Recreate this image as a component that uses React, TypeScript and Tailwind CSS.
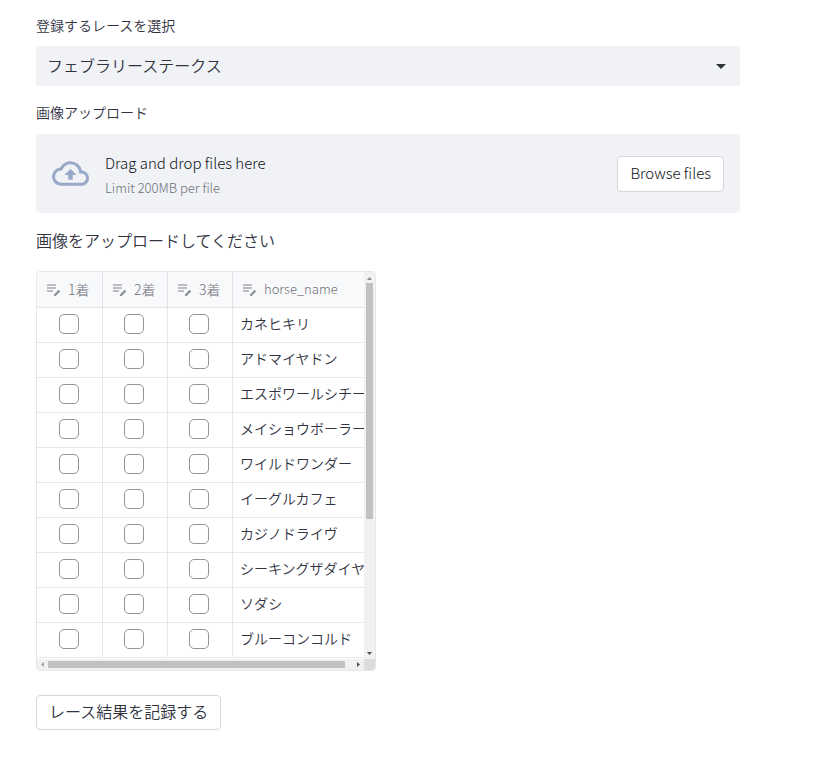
import React, { useState } from 'react';

const races = ['フェブラリーステークス'];

const places = ['1着', '2着', '3着'];

const horses = [
  'カネヒキリ',
  'アドマイヤドン',
  'エスポワールシチー',
  'メイショウボーラー',
  'ワイルドワンダー',
  'イーグルカフェ',
  'カジノドライヴ',
  'シーキングザダイヤ',
  'ソダシ',
  'ブルーコンコルド',
];

const EditIcon: React.FC = () => (
  <svg className="w-4 h-4 shrink-0" viewBox="0 0 16 16" fill="none" aria-hidden="true">
    <path d="M2 3h9M2 6h9M2 9h6" stroke="#bcbdc1" strokeWidth="2" />
    <path d="M9 14v-1.6l4.6-4.6 1.6 1.6L10.6 14z" fill="#8e9097" />
  </svg>
);

const CloudIcon: React.FC = () => (
  <svg className="w-[37px] h-[37px] shrink-0" viewBox="0 0 24 24" fill="#98a8c8" aria-hidden="true">
    <path d="M19.35 10.04A7.49 7.49 0 0 0 12 4C9.11 4 6.6 5.64 5.35 8.04A5.994 5.994 0 0 0 0 14c0 3.31 2.69 6 6 6h13c2.76 0 5-2.24 5-5 0-2.64-2.05-4.78-4.65-4.96zM19 18H6c-2.21 0-4-1.79-4-4 0-2.05 1.53-3.76 3.56-3.97l1.07-.11.5-.95A5.469 5.469 0 0 1 12 6c2.62 0 4.88 1.86 5.39 4.43l.3 1.5 1.53.11A2.98 2.98 0 0 1 22 15c0 1.65-1.35 3-3 3zM8 13h2.55v3h2.9v-3H16l-4-4z" />
  </svg>
);

const App: React.FC = () => {
  const [race, setRace] = useState(races[0]);
  const [checked, setChecked] = useState<Record<string, boolean>>({});

  const toggle = (key: string) => {
    setChecked((prev) => ({ ...prev, [key]: !prev[key] }));
  };

  return (
    <main className="bg-white pl-9 pr-[77px] pt-[15px] pb-10 font-['Noto_Sans_CJK_JP',sans-serif] font-[350] text-base text-[#31333f]">
      {/* Race select */}
      <label htmlFor="race" className="block text-sm leading-5 mb-[11px]">
        登録するレースを選択
      </label>
      <div className="relative mb-4">
        <select
          id="race"
          value={race}
          onChange={(e) => setRace(e.target.value)}
          className="block w-full h-10 appearance-none rounded bg-[#f0f2f6] pl-[11px] pr-9 pb-0.5 leading-6"
        >
          {races.map((name) => (
            <option key={name}>{name}</option>
          ))}
        </select>
        <svg className="absolute right-3.5 top-[18px] w-2.5 h-[5px] pointer-events-none" viewBox="0 0 10 5" aria-hidden="true">
          <path d="M0 0h10L5 5z" fill="#31333f" />
        </svg>
      </div>

      {/* Image upload */}
      <p className="text-sm leading-5 mb-3">画像アップロード</p>
      <section className="flex items-center rounded bg-[#f0f2f6] px-4 py-[13px] mb-[15px]">
        <CloudIcon />
        <div className="ml-4 pt-[3px] flex-1 font-light">
          <p className="text-[15px] leading-[25px] text-[#0e1117]">Drag and drop files here</p>
          <p className="text-[13px] leading-[25px] text-[#6f717a]">Limit 200MB per file</p>
        </div>
        <button type="button" className="h-9 rounded border border-[#d6d6d9] bg-white px-3 text-[15px] font-light text-[#0e1117]">
          Browse files
        </button>
      </section>

      <p className="leading-6 mb-[19px]">画像をアップロードしてください</p>

      {/* Result table */}
      <div className="w-[340px] max-w-full overflow-hidden rounded border border-[#e6e7ea] mb-6">
        <div className="flex">
          <div className="flex-1 min-w-0 overflow-hidden pb-px">
            <table className="w-full table-fixed border-separate border-spacing-0 text-sm">
              <thead>
                <tr className="h-9 bg-[#f8f9fb] text-[#6f717a]">
                  {places.map((place, i) => (
                    <th key={place} className={`border-b border-r border-[#e2e3e6] p-0 font-light ${i === 0 ? 'w-[66px]' : 'w-[65px]'}`}>
                      <div className="flex items-center gap-[7px] pl-2">
                        <EditIcon />
                        <span className="pb-0.5">{place}</span>
                      </div>
                    </th>
                  ))}
                  <th className="border-b border-[#e2e3e6] p-0 font-light text-[13px]">
                    <div className="flex items-center gap-[7px] pl-2">
                      <EditIcon />
                      horse_name
                    </div>
                  </th>
                </tr>
              </thead>
              <tbody>
                {horses.map((horse) => (
                  <tr key={horse} className="h-[35px]">
                    {places.map((place) => {
                      const key = `${horse}-${place}`;
                      return (
                        <td key={place} className="border-b border-r border-[#e6e7ea] p-0 pr-0.5 pb-0.5">
                          <input
                            type="checkbox"
                            aria-label={`${horse} ${place}`}
                            checked={!!checked[key]}
                            onChange={() => toggle(key)}
                            className="block mx-auto w-5 h-5 appearance-none rounded-[5px] border border-[#92939b] checked:bg-[#ff4b4b] checked:border-[#ff4b4b]"
                          />
                        </td>
                      );
                    })}
                    <td className="border-b border-[#e6e7ea] p-0 pl-[7px] pb-1 whitespace-nowrap overflow-hidden leading-5">{horse}</td>
                  </tr>
                ))}
              </tbody>
            </table>
          </div>
          {/* Vertical scrollbar */}
          <div className="w-[11px] shrink-0 flex flex-col items-center justify-between bg-[#f1f1f1] py-1" aria-hidden="true">
            <svg className="w-[5px] h-[3px] my-px" viewBox="0 0 5 3">
              <path d="M0 3h5L2.5 0z" fill="#8b8b8b" />
            </svg>
            <div className="w-[7px] flex-1 mt-0.5">
              <div className="h-[64%] bg-[#c1c1c1]" />
            </div>
            <svg className="w-[5px] h-[3px]" viewBox="0 0 5 3">
              <path d="M0 0h5L2.5 3z" fill="#505050" />
            </svg>
          </div>
        </div>
        {/* Horizontal scrollbar */}
        <div className="flex h-[11px] bg-[#f1f1f1]" aria-hidden="true">
          <div className="flex flex-1 items-center justify-between px-1">
            <svg className="w-[3px] h-[5px]" viewBox="0 0 3 5">
              <path d="M3 0v5L0 2.5z" fill="#a3a3a3" />
            </svg>
            <div className="flex-1 ml-1 mr-3 h-[7px] bg-[#c1c1c1]" />
            <svg className="w-[3px] h-[5px]" viewBox="0 0 3 5">
              <path d="M0 0v5l3-2.5z" fill="#505050" />
            </svg>
          </div>
          <div className="w-[11px] bg-[#dcdcdc]" />
        </div>
      </div>

      <button type="button" className="block h-[35px] rounded border border-[#d6d6d9] bg-white px-3 pb-1">
        レース結果を記録する
      </button>
    </main>
  );
};

export default App;
